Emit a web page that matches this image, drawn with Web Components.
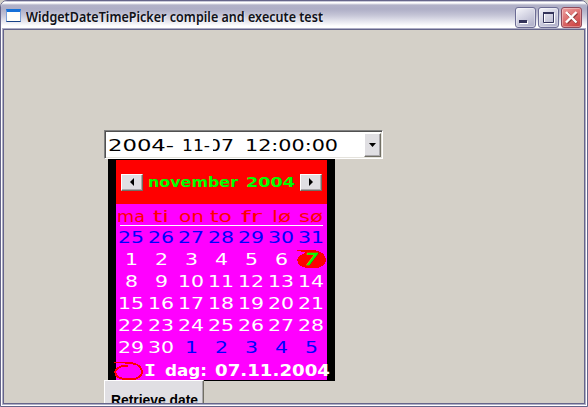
<!DOCTYPE html>
<html lang="en"><head><meta charset="utf-8"><title>WidgetDateTimePicker compile and execute test</title>
<style>html,body{margin:0;width:588px;height:407px;overflow:hidden;background:#d4d0c8}</style></head><body>
<app-window caption="WidgetDateTimePicker compile and execute test">
  <date-field></date-field>
  <month-calendar></month-calendar>
  <push-button>Retrieve date</push-button>
</app-window>
<script>
const shadow=(el,html)=>{const r=el.attachShadow({mode:'open'});r.innerHTML=html;return r};

// Text whose glyphs are stretched horizontally to the width given in the w attribute.
class FitText extends HTMLElement{
  connectedCallback(){
    const w=+this.getAttribute('w');
    const r=shadow(this,`<style>:host{display:block;flex:none;width:${w}px;white-space:pre}
      span{display:inline-block;transform-origin:0 50%}</style><span><slot></slot></span>`);
    const s=r.querySelector('span');
    s.style.transform=`scaleX(${w/s.getBoundingClientRect().width})`;
  }
}

class CaptionButton extends HTMLElement{
  connectedCallback(){
    const k=this.getAttribute('kind');
    const art={
      min:'<path d="M5 14h8v3H5z" fill="#fff"/><path d="M4 13h8v3H4z" fill="#33335a"/>',
      max:'<path d="M6.500 6.500h10v10h-10z" fill="none" stroke="#fff"/><path d="M5.500 5.500h10v10h-10z" fill="none" stroke="#33335a"/><path d="M5 5h11v2H5z" fill="#33335a"/>',
      close:'<path d="M6 6l10 10M16 6L6 16" stroke="#8d3838" stroke-width="3"/><path d="M5 5l10.500 10.500M15.500 5L5 15.500" stroke="#fff" stroke-width="2.400"/>'}[k];
    const c=k==='close'?['#eeA0a0','#cf4848','#8e4a5c']:['#f6f6fb','#b5b5cd','#6c6c94'];
    shadow(this,`<style>:host{display:block;box-sizing:border-box;width:21px;height:21px;border:1px solid ${c[2]};border-radius:3px;
      background:linear-gradient(150deg,${c[0]},${c[1]} 85%);box-shadow:inset 0 0 0 1px #ffffff55}
      svg{display:block;margin:-1px}</style><svg width="21" height="21">${art}</svg>`);
  }
}

class AppWindow extends HTMLElement{
  connectedCallback(){
    shadow(this,`<style>
    :host{display:flex;flex-direction:column;box-sizing:border-box;width:588px;height:407px;border:1px solid #65658a;border-radius:7px 7px 0 0;background:#fff;padding:0 1px 1px;overflow:hidden}
    header{display:flex;align-items:center;height:27px;flex:none;padding:4px 5px 0 5px;box-sizing:border-box;margin:0 -1px;
      background:linear-gradient(#9292b2 0,#fff 1px,#fff 2px,#b2b2c8 4px,#aeaec6 8px,#c4c4d6 14px,#e4e4ed 20px,#fff 25px)}
    .icon{width:15px;height:13px;box-sizing:border-box;border:1px solid #7ba0d8;border-top:3px solid #1671d8;border-bottom-color:#174287;background:#fffffa;margin:-3px 5px 0 0;flex:none}
    fit-text{font:600 14px/20px "Noto Sans","Open Sans",sans-serif;color:#111118;text-shadow:1px 1px #ffffff80}
    nav{margin-left:auto;display:flex;gap:2px;padding-top:1px;margin-bottom:-1px}
    main{flex:1;min-height:0;overflow:hidden;background:#d4d0c8;border:1px solid #65658a;box-shadow:0 0 0 1px #aeaec6;margin:1px 1px 1px;padding:100px 0 0 100px}
    </style><header><div class="icon"></div><fit-text w="297">${this.getAttribute('caption')}</fit-text>
    <nav><caption-button kind="min"></caption-button><caption-button kind="max"></caption-button><caption-button kind="close"></caption-button></nav></header>
    <main><slot></slot></main>`);
  }
}

// Small raised button with a black triangle.
class ArrowButton extends HTMLElement{
  connectedCallback(){
    const p={left:'M4 0v8L0 4z',right:'M0 0v8l4-4z',down:'M0 0h7L3.500 4z'}[this.getAttribute('dir')];
    shadow(this,`<style>:host{display:flex;flex:none;align-items:center;justify-content:center;box-sizing:border-box;background:#e0dfe3;border:1px solid;border-color:#fff #716f64 #716f64 #fff;box-shadow:inset -1px -1px #aaa8ac}</style>
    <svg width="7" height="8" viewBox="${this.getAttribute('dir')==='down'?'0 -2 7 8':'-1 0 7 8'}"><path d="${p}"/></svg>`);
  }
}

class DateField extends HTMLElement{
  connectedCallback(){
    shadow(this,`<style>
    :host{display:flex;box-sizing:border-box;width:279px;height:29px;background:#fff;border:1px solid;border-color:#808080 #fff #fff #808080;box-shadow:inset 1px 1px #505050,inset -1px -1px #e4e2dc;padding:2px 1px 1px 3px;font:16px/25px "DejaVu Sans",sans-serif;color:#000}
    .month{margin-left:8px}
    .day{margin:0 11px 0 -2px;clip-path:inset(0 0 0 5px)}
    arrow-button{width:17px;margin-left:auto}
    </style><fit-text w="66">2004-</fit-text><fit-text class="month" w="28">11-</fit-text><fit-text class="day" w="26">07</fit-text><fit-text w="93">12:00:00</fit-text><arrow-button dir="down"></arrow-button>`);
  }
}

// Hand-drawn red ring marking the current day.
class DayRing extends HTMLElement{
  connectedCallback(){
    shadow(this,`<style>:host{display:block;flex:none;width:30px;height:20px}svg{display:block;overflow:visible}</style>
    <svg width="30" height="20" shape-rendering="crispEdges" fill="${this.hasAttribute('filled')?'red':'none'}" stroke="red" stroke-width="1.900"><path d="M0 1.500h10C17 2 22 2 25 5C29 9 29 13 25 16C21 19 12 19 6 17C1 15 0 10 3 8C6 5 9 4 14 5"/></svg>`);
  }
}

class MonthCalendar extends HTMLElement{
  connectedCallback(){
    const nums=[25,26,27,28,29,30,31,...Array.from({length:30},(_,i)=>i+1),1,2,3,4,5];
    const cells=nums.map((n,i)=>`<div class="${i<7||i>36?'out':''} ${i===13?'today':''}">${i===13?'<day-ring filled></day-ring>':''}<fit-text w="${n>9?26:13}">${n}</fit-text></div>`).join('');
    const days=[['ma',28],['ti',16],['on',25],['to',22],['fr',21],['lø',19],['sø',24]].map(([d,w])=>`<div><fit-text w="${w}">${d}</fit-text></div>`).join('');
    shadow(this,`<style>
    :host{display:block;box-sizing:border-box;width:227px;height:222px;margin-left:4px;background:#f0f;border:solid #000;border-width:1px 8px;font:15.5px/22px "DejaVu Sans",sans-serif;color:#fff}
    header{display:flex;align-items:center;justify-content:space-between;height:44px;box-sizing:border-box;background:#f00;padding:0 5px;color:#0f0;font-weight:bold;font-size:14px}
    header arrow-button{width:22px;height:17px}
    .title{display:flex;gap:8px}
    .days,.grid{display:grid;grid-template-columns:repeat(7,30px)}
    .days{height:21px;color:#f00;line-height:26px}
    .grid>div,.days>div{display:flex;justify-content:center}
    hr{border:0;height:1px;background:#fff;margin:0 4px}
    .grid{grid-auto-rows:22px;line-height:25px}
    .out{color:#00f}
    .today{position:relative;color:#0f0}
    .today fit-text{position:relative;font-style:oblique;-webkit-text-stroke:.6px #0f0}
    day-ring{position:absolute;left:1px;top:1px}
    footer{display:flex;align-items:center;height:22px;font-weight:bold;font-size:15px;line-height:24px}
    footer day-ring{position:static;margin:3px 0 0 -2px}
    footer fit-text{margin-top:4px}
    .lead{margin-right:9px;font-family:"DejaVu Sans Mono",monospace}.label{margin-right:8px}
    </style>
    <header><arrow-button dir="left"></arrow-button><div class="title"><fit-text w="90">november</fit-text><fit-text w="49">2004</fit-text></div><arrow-button dir="right"></arrow-button></header>
    <div class="days">${days}</div><hr><div class="grid">${cells}</div>
    <footer><day-ring></day-ring><fit-text class="lead" w="12">I</fit-text><fit-text class="label" w="42">dag:</fit-text><fit-text w="115">07.11.2004</fit-text></footer>`);
  }
}

class PushButton extends HTMLElement{
  connectedCallback(){
    shadow(this,`<style>:host{display:flex;justify-content:center;box-sizing:border-box;width:100px;height:36px;margin-top:-1px;background:#e0dfe3;border:1px solid;border-color:#fff #716f64 #716f64 #fff;box-shadow:inset -1px -1px #aaa8ac;padding-top:9px;font:bold 14px/20px "Liberation Sans",Arial,sans-serif;color:#000}</style><fit-text w="87"><slot></slot></fit-text>`);
  }
}
for(const [n,c] of [['fit-text',FitText],['caption-button',CaptionButton],['arrow-button',ArrowButton],['day-ring',DayRing],['date-field',DateField],['month-calendar',MonthCalendar],['push-button',PushButton],['app-window',AppWindow]])customElements.define(n,c);
</script></body></html>
